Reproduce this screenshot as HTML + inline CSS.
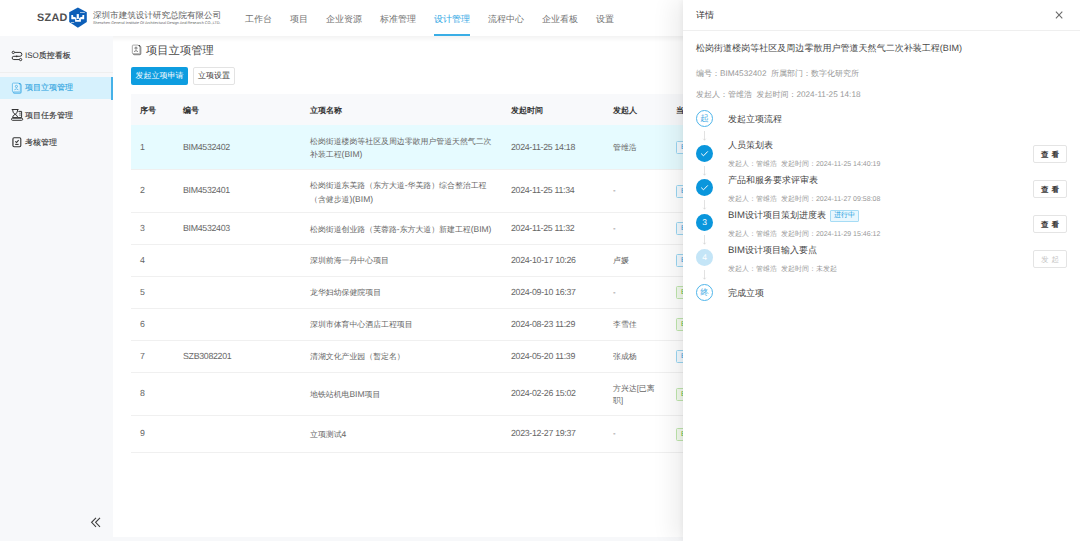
<!DOCTYPE html>
<html><head><meta charset="utf-8">
<style>
*{margin:0;padding:0;box-sizing:border-box}
html,body{text-rendering:geometricPrecision;width:1080px;height:541px;overflow:hidden;background:#f7f8fa;font-family:"Liberation Sans",sans-serif;color:#333}
.abs{position:absolute}
#hdr{position:absolute;left:0;top:0;width:1080px;height:36px;background:#fff}
#hdrsh{position:absolute;left:113px;top:36px;width:967px;height:6px;background:linear-gradient(#f3f3f3,#fff)}
.nav{position:absolute;top:12.6px;font-size:9px;line-height:12px;color:#737373;white-space:nowrap}
.nav.act{color:#2ea6e4}
#side{position:absolute;left:0;top:36px;width:113px;height:505px;background:#f7f8fa}
.si{position:absolute;left:0;width:113px;height:22px;font-size:8px;-webkit-text-stroke:0.12px;line-height:22px;color:#333;padding-left:25px;white-space:nowrap}
.si svg{position:absolute;left:11px;top:5px}
#main{position:absolute;left:113px;top:36px;width:967px;height:501px;background:#fff}
.btn{position:absolute;height:18px;font-size:8px;line-height:18px;text-align:center;border-radius:2px;white-space:nowrap}
.th{position:absolute;margin-top:1px;font-size:8px;font-weight:bold;color:#333;line-height:12px;white-space:nowrap}
.row{position:absolute;left:131px;width:560px;border-bottom:1px solid #f0f0f0}
.ln{font-size:8.2px}
.c{position:absolute;margin-top:0.8px;font-size:7.9px;line-height:12.6px;color:#666}
.num{font-size:8.8px;letter-spacing:-0.3px;margin-top:-0.4px}
#drw{position:absolute;left:683px;top:0;width:397px;height:541px;background:#fff;box-shadow:-10px 0 22px rgba(0,0,0,0.07),-2px 0 5px rgba(0,0,0,0.04)}
.circ{position:absolute;left:13px;width:17px;height:17px;border-radius:50%;text-align:center;font-size:8.5px;line-height:17px}
.stt{position:absolute;left:45px;font-size:9px;line-height:12px;color:#454545;white-space:nowrap}
.meta{position:absolute;margin-top:0.5px;left:45px;font-size:7px;line-height:9px;color:#999;white-space:nowrap}
.arr{position:absolute;left:21px;width:1px;background:#ccc}
.vbtn{position:absolute;left:350px;width:34px;height:18px;border:1px solid #e4e4e4;border-radius:2px;font-size:7.5px;font-weight:bold;line-height:18px;text-align:center;color:#3a3a3a;letter-spacing:3px;padding-left:3px}
</style></head><body>
<div id="hdr">
  <div class="abs" style="left:37px;top:11.5px;font-size:10.8px;line-height:13px;font-weight:bold;color:#505050;letter-spacing:0.3px">SZAD</div>
  <svg class="abs" style="left:66px;top:5px" width="26" height="26" viewBox="0 0 26 26"><polygon points="11.9,2.5 20.8,7.2 20.8,16.9 11.9,22.7 3.2,16.9 3.2,7.2" fill="#0d5fb8"/><g fill="#fff"><polygon points="5.3,9.9 7.1,9.9 7.1,11.8 9.6,12.3 9.6,14.3 5.3,14.3"/><path d="M9.1 12.8H10.4V15H13.1V12.8H14.9V16.8H9.1Z"/><rect x="10.7" y="9.1" width="2.2" height="4.8"/><polygon points="16.4,10.1 18.2,10.1 18.2,14.3 14.2,14.3 14.2,12.3 16.4,11.8"/><rect x="14" y="7.1" width="4.8" height="0.6"/><rect x="5" y="17.4" width="3.2" height="0.6"/></g></svg>
  <div class="abs" style="left:93px;top:9.5px;font-size:8.55px;line-height:11px;color:#606060;white-space:nowrap">深圳市建筑设计研究总院有限公司</div>
  <div class="abs" style="left:93px;top:21px;font-size:3.8px;line-height:4px;color:#666;white-space:nowrap">Shenzhen General Institute Of Architectural Design And Research CO.,LTD.</div>
  <div class="nav" style="left:245px">工作台</div>
  <div class="nav" style="left:290px">项目</div>
  <div class="nav" style="left:326px">企业资源</div>
  <div class="nav" style="left:380px">标准管理</div>
  <div class="nav act" style="left:434px">设计管理</div>
  <div class="abs" style="left:434px;top:33.7px;width:36px;height:2px;background:#3aaee6"></div>
  <div class="nav" style="left:488px">流程中心</div>
  <div class="nav" style="left:542px">企业看板</div>
  <div class="nav" style="left:596px">设置</div>
</div>
<div id="side">
  <div class="si" style="top:9px"><span style="-webkit-text-stroke:0">ISO</span>质控看板</div>
  <svg class="abs" style="z-index:2;left:8px;top:10px" width="20" height="20" viewBox="0 0 20 20"><g fill="none" stroke="#333" stroke-width="1"><path d="M6.5 6.4H11.9A1.95 1.95 0 0 1 11.9 10.3H5.8A1.62 1.62 0 0 0 5.8 13.55H11.4"/><circle cx="5.3" cy="6.4" r="1.15"/><circle cx="12.6" cy="13.55" r="1.15"/></g><circle cx="8.7" cy="10.3" r="0.9" fill="#333"/></svg>
  <svg class="abs" style="z-index:2;left:8px;top:42px" width="20" height="20" viewBox="0 0 20 20"><rect x="5.4" y="6.2" width="7.6" height="8.9" rx="1" fill="none" stroke="#5cb8ea" stroke-width="1.3"/><path d="M5.2 5.1H10.6L12.3 6.8V13.1Q12.3 13.9 11.5 13.9H5.2Q4.4 13.9 4.4 13.1V5.9Q4.4 5.1 5.2 5.1Z" fill="#e3f5fd" stroke="#6cc0ec" stroke-width="0.9"/><path d="M10.5 5.1L12.4 7V5.1Z" fill="#2a9fe0"/><circle cx="8.4" cy="8.4" r="1.1" fill="none" stroke="#55b5e9" stroke-width="0.9"/><path d="M6.4 11.8Q8.4 9.8 10.4 11.8" fill="none" stroke="#55b5e9" stroke-width="0.9"/></svg>
  <svg class="abs" style="z-index:2;left:8px;top:69px" width="20" height="20" viewBox="0 0 20 20"><g fill="none" stroke="#333" stroke-width="1"><path d="M3.7 4.5H10.5"/><path d="M4.6 4.5Q4.6 8.3 7.1 9.3Q4.6 10.4 4.6 12.6H9.7Q9.7 10.4 7.1 9.3Q9.7 8.3 9.7 4.5"/><path d="M10.4 6.4H13.6V12.6H9.9"/><path d="M11.2 8.2H12.8M11.2 10.1H12.8" stroke-width="0.8"/><rect x="3.5" y="13.2" width="11.2" height="2.1" rx="1"/></g></svg>
  <svg class="abs" style="z-index:2;left:8px;top:96px" width="20" height="20" viewBox="0 0 20 20"><g fill="none" stroke="#333" stroke-width="1.1"><rect x="4.9" y="5.7" width="7.9" height="9" rx="1.2"/><path d="M7.3 9.3L8.6 10.5L10.6 8.2"/><path d="M7.2 12.4H10.6"/></g><path d="M4.9 7V13.4" stroke="#777" stroke-width="0.8"/></svg>

  <div class="abs" style="left:0;top:35.5px;width:113px;height:1px;background:#efefef"></div>
  <div class="si" style="top:41px;background:#d6f1fd;color:#2aa3e0">项目立项管理</div>
  <div class="abs" style="left:111px;top:41px;width:2px;height:23px;background:#45b1e8"></div>
  <div class="si" style="top:69px">项目任务管理</div>
  <div class="si" style="top:96px">考核管理</div>
  <svg class="abs" style="left:89px;top:480px" width="13" height="13" viewBox="0 0 13 13"><path d="M7 1.8L2.6 6.3L7 10.8M11 1.8L6.6 6.3L11 10.8" fill="none" stroke="#3c3c3c" stroke-width="1.1"/></svg>
</div>
<div id="main"></div>
<div id="hdrsh"></div>
<div class="abs" style="left:146px;top:43.5px;font-size:11.3px;line-height:14px;color:#4a4a4a;white-space:nowrap">项目立项管理</div>
<svg class="abs" style="left:128px;top:42px" width="18" height="18" viewBox="0 0 18 18"><rect x="5.3" y="4.2" width="7.4" height="8.4" rx="1" fill="none" stroke="#8c8c8c" stroke-width="1.3"/><path d="M5.1 3.1H10.2L11.9 4.8V10.9Q11.9 11.7 11.1 11.7H5.1Q4.3 11.7 4.3 10.9V3.9Q4.3 3.1 5.1 3.1Z" fill="#fff" stroke="#a0a0a0" stroke-width="0.9"/><path d="M10.1 3.1L12 5V3.1Z" fill="#4a4a4a"/><circle cx="8" cy="6.1" r="1.05" fill="none" stroke="#6a6a6a" stroke-width="0.9"/><path d="M6.1 9.6Q8 7.6 9.9 9.6" fill="none" stroke="#6a6a6a" stroke-width="0.9"/></svg>
<div class="btn" style="left:131px;top:67.2px;width:57.2px;background:#0e9de0;color:#fff">发起立项申请</div>
<div class="btn" style="left:193px;top:67.2px;width:42px;border:1px solid #e3e3e3;color:#333;line-height:16px">立项设置</div>

<div class="abs" style="left:131px;top:94px;width:560px;height:32px;background:#f8f9fb;border-bottom:1px solid #ececec"></div>
<div class="th" style="left:140px;top:104px">序号</div>
<div class="th" style="left:183px;top:104px">编号</div>
<div class="th" style="left:310px;top:104px">立项名称</div>
<div class="th" style="left:511px;top:104px">发起时间</div>
<div class="th" style="left:613px;top:104px">发起人</div>
<div class="th" style="left:676px;top:104px">当前</div>

<div id="rows">
<div class="row" style="top:125px;height:45px;background:#e6fbff;"></div>
<div class="c num" style="left:140px;top:141.2px">1</div>
<div class="c num" style="left:183px;top:141.2px">BIM4532402</div>
<div class="c" style="left:310px;top:134.9px;white-space:nowrap">松岗街道楼岗等社区及周边零散用户管道天然气二次<br>补装工程<span style="font-size:8.5px">(BIM)</span></div>
<div class="c num" style="left:511px;top:141.2px;white-space:nowrap">2024-11-25 14:18</div>
<div class="c" style="left:613px;top:141.2px;white-space:nowrap">管维浩</div>
<div class="abs" style="left:676px;top:141.0px;width:16px;height:13px;border:1px solid #9ad6f2;background:#f2faff;border-radius:1.5px;font-size:7px;line-height:11px;color:#3a9be0;padding-left:4px">B</div>
<div class="row" style="top:169px;height:44px;"></div>
<div class="c num" style="left:140px;top:184.7px">2</div>
<div class="c num" style="left:183px;top:184.7px">BIM4532401</div>
<div class="c" style="left:310px;top:178.4px;white-space:nowrap">松岗街道东美路（东方大道<span style="font-size:8.5px">-</span>华美路）综合整治工程<br>（含健步道<span style="font-size:8.5px">)(BIM)</span></div>
<div class="c num" style="left:511px;top:184.7px;white-space:nowrap">2024-11-25 11:34</div>
<div class="c" style="left:613px;top:184.7px;white-space:nowrap">-</div>
<div class="abs" style="left:676px;top:184.5px;width:16px;height:13px;border:1px solid #9ad6f2;background:#f2faff;border-radius:1.5px;font-size:7px;line-height:11px;color:#3a9be0;padding-left:4px">B</div>
<div class="row" style="top:212px;height:33px;"></div>
<div class="c num" style="left:140px;top:222.2px">3</div>
<div class="c num" style="left:183px;top:222.2px">BIM4532403</div>
<div class="c" style="left:310px;top:222.2px;white-space:nowrap">松岗街道创业路（芙蓉路<span style="font-size:8.5px">-</span>东方大道）新建工程<span style="font-size:8.5px">(BIM)</span></div>
<div class="c num" style="left:511px;top:222.2px;white-space:nowrap">2024-11-25 11:32</div>
<div class="c" style="left:613px;top:222.2px;white-space:nowrap">-</div>
<div class="abs" style="left:676px;top:222.0px;width:16px;height:13px;border:1px solid #9ad6f2;background:#f2faff;border-radius:1.5px;font-size:7px;line-height:11px;color:#3a9be0;padding-left:4px">B</div>
<div class="row" style="top:244px;height:33px;"></div>
<div class="c num" style="left:140px;top:254.2px">4</div>
<div class="c" style="left:310px;top:254.2px;white-space:nowrap">深圳前海一丹中心项目</div>
<div class="c num" style="left:511px;top:254.2px;white-space:nowrap">2024-10-17 10:26</div>
<div class="c" style="left:613px;top:254.2px;white-space:nowrap">卢媛</div>
<div class="abs" style="left:676px;top:254.0px;width:16px;height:13px;border:1px solid #9ad6f2;background:#f2faff;border-radius:1.5px;font-size:7px;line-height:11px;color:#3a9be0;padding-left:4px">B</div>
<div class="row" style="top:276px;height:33px;"></div>
<div class="c num" style="left:140px;top:286.2px">5</div>
<div class="c" style="left:310px;top:286.2px;white-space:nowrap">龙华妇幼保健院项目</div>
<div class="c num" style="left:511px;top:286.2px;white-space:nowrap">2024-09-10 16:37</div>
<div class="c" style="left:613px;top:286.2px;white-space:nowrap">-</div>
<div class="abs" style="left:676px;top:286.0px;width:16px;height:13px;border:1px solid #bfe6ad;background:#f3faef;border-radius:1.5px;font-size:7px;line-height:11px;color:#67c23a;padding-left:4px">B</div>
<div class="row" style="top:308px;height:33px;"></div>
<div class="c num" style="left:140px;top:318.2px">6</div>
<div class="c" style="left:310px;top:318.2px;white-space:nowrap">深圳市体育中心酒店工程项目</div>
<div class="c num" style="left:511px;top:318.2px;white-space:nowrap">2024-08-23 11:29</div>
<div class="c" style="left:613px;top:318.2px;white-space:nowrap">李雪佳</div>
<div class="abs" style="left:676px;top:318.0px;width:16px;height:13px;border:1px solid #bfe6ad;background:#f3faef;border-radius:1.5px;font-size:7px;line-height:11px;color:#67c23a;padding-left:4px">B</div>
<div class="row" style="top:340px;height:33px;"></div>
<div class="c num" style="left:140px;top:350.2px">7</div>
<div class="c num" style="left:183px;top:350.2px">SZB3082201</div>
<div class="c" style="left:310px;top:350.2px;white-space:nowrap">清湖文化产业园（暂定名）</div>
<div class="c num" style="left:511px;top:350.2px;white-space:nowrap">2024-05-20 11:39</div>
<div class="c" style="left:613px;top:350.2px;white-space:nowrap">张成杨</div>
<div class="abs" style="left:676px;top:350.0px;width:16px;height:13px;border:1px solid #9ad6f2;background:#f2faff;border-radius:1.5px;font-size:7px;line-height:11px;color:#3a9be0;padding-left:4px">B</div>
<div class="row" style="top:372px;height:44px;"></div>
<div class="c num" style="left:140px;top:387.7px">8</div>
<div class="c" style="left:310px;top:387.7px;white-space:nowrap">地铁站机电<span style="font-size:8.5px">BIM</span>项目</div>
<div class="c num" style="left:511px;top:387.7px;white-space:nowrap">2024-02-26 15:02</div>
<div class="c" style="left:613px;top:381.4px;white-space:nowrap"><span style="display:block;line-height:11.8px;margin-top:0.6px">方兴达[已离<br>职]</span></div>
<div class="abs" style="left:676px;top:387.5px;width:16px;height:13px;border:1px solid #bfe6ad;background:#f3faef;border-radius:1.5px;font-size:7px;line-height:11px;color:#67c23a;padding-left:4px">B</div>
<div class="row" style="top:415px;height:38px;"></div>
<div class="c num" style="left:140px;top:427.7px">9</div>
<div class="c" style="left:310px;top:427.7px;white-space:nowrap">立项测试<span style="font-size:8.5px">4</span></div>
<div class="c num" style="left:511px;top:427.7px;white-space:nowrap">2023-12-27 19:37</div>
<div class="c" style="left:613px;top:427.7px;white-space:nowrap">-</div>
<div class="abs" style="left:676px;top:427.5px;width:16px;height:13px;border:1px solid #bfe6ad;background:#f3faef;border-radius:1.5px;font-size:7px;line-height:11px;color:#67c23a;padding-left:4px">B</div>
</div>

<div id="drw">
  <div class="abs" style="left:13px;top:9px;font-size:9px;line-height:12px;color:#333">详情</div>
  <svg class="abs" style="left:371.5px;top:11px" width="8" height="8" viewBox="0 0 8 8"><path d="M0.9 0.6L7.3 7.4M7.3 0.6L0.9 7.4" stroke="#6a6a6a" stroke-width="1.05"/></svg>
  <div class="abs" style="left:0;top:30px;width:397px;height:1px;background:#efefef"></div>
  <div class="abs" style="left:13px;top:41.5px;font-size:9.04px;line-height:12px;color:#484848;white-space:nowrap">松岗街道楼岗等社区及周边零散用户管道天然气二次补装工程(BIM)</div>
  <div class="abs" style="left:13px;top:69px;font-size:8px;line-height:10px;color:#999;white-space:nowrap">编号：<span class="ln">BIM4532402</span>&nbsp; 所属部门：数字化研究所</div>
  <div class="abs" style="left:13px;top:90px;font-size:8px;line-height:10px;color:#999;white-space:nowrap">发起人：管维浩&nbsp; 发起时间：<span class="ln">2024-11-25 14:18</span></div>

  <div class="circ" style="top:109.5px;border:1px solid #4fb5ea;color:#3aa9e4;line-height:15px">起</div>
  <div class="stt" style="top:112.5px">发起立项流程</div>

  <div class="circ" style="top:144.5px;background:#0a96dc"><svg width="17" height="17" viewBox="0 0 17 17" style="display:block"><path d="M5.2 8.6L7.5 10.8L11.8 6.4" fill="none" stroke="#fff" stroke-width="1"/></svg></div>
  <div class="stt" style="top:139.2px">人员策划表</div>
  <div class="meta" style="top:159.5px">发起人：管维浩&nbsp; 发起时间：2024-11-25 14:40:19</div>
  <div class="vbtn" style="top:145px">查看</div>

  <div class="circ" style="top:179.3px;background:#0a96dc"><svg width="17" height="17" viewBox="0 0 17 17" style="display:block"><path d="M5.2 8.6L7.5 10.8L11.8 6.4" fill="none" stroke="#fff" stroke-width="1"/></svg></div>
  <div class="stt" style="top:174.3px">产品和服务要求评审表</div>
  <div class="meta" style="top:194.6px">发起人：管维浩&nbsp; 发起时间：2024-11-27 09:58:08</div>
  <div class="vbtn" style="top:180px">查看</div>

  <div class="circ" style="top:213.9px;background:#0a96dc;color:#fff">3</div>
  <div class="stt" style="top:209.4px"><span style="font-size:9.5px">BIM</span>设计项目策划进度表</div>
  <div class="abs" style="left:147px;top:209.5px;width:29px;height:12px;border:1px solid #a6dcf5;background:#e8f7fe;color:#1f9fe0;font-size:7px;line-height:10px;text-align:center;border-radius:1px">进行中</div>
  <div class="meta" style="top:229.5px">发起人：管维浩&nbsp; 发起时间：2024-11-29 15:46:12</div>
  <div class="vbtn" style="top:215px">查看</div>

  <div class="circ" style="top:248.8px;background:#c4e5f7;color:#fff">4</div>
  <div class="stt" style="top:243.8px"><span style="font-size:9.5px">BIM</span>设计项目输入要点</div>
  <div class="meta" style="top:264.2px">发起人：管维浩&nbsp; 发起时间：未发起</div>
  <div class="vbtn" style="top:250px;color:#c4c4c4;font-weight:normal">发起</div>

  <div class="circ" style="top:284px;border:1px solid #4fb5ea;color:#3aa9e4;line-height:15px">终</div>
  <div class="stt" style="top:287px">完成立项</div>
  <svg class="abs" style="left:18px;top:130.6px" width="7" height="10" viewBox="0 0 7 10"><path d="M3.5 0V9.2M2.2 7.7L3.5 9.2L4.8 7.7" fill="none" stroke="#cfcfcf" stroke-width="0.6"/></svg>
  <svg class="abs" style="left:18px;top:165.6px" width="7" height="10" viewBox="0 0 7 10"><path d="M3.5 0V9.2M2.2 7.7L3.5 9.2L4.8 7.7" fill="none" stroke="#cfcfcf" stroke-width="0.6"/></svg>
  <svg class="abs" style="left:18px;top:200.4px" width="7" height="10" viewBox="0 0 7 10"><path d="M3.5 0V9.2M2.2 7.7L3.5 9.2L4.8 7.7" fill="none" stroke="#cfcfcf" stroke-width="0.6"/></svg>
  <svg class="abs" style="left:18px;top:235.1px" width="7" height="10" viewBox="0 0 7 10"><path d="M3.5 0V9.2M2.2 7.7L3.5 9.2L4.8 7.7" fill="none" stroke="#cfcfcf" stroke-width="0.6"/></svg>
  <svg class="abs" style="left:18px;top:269.9px" width="7" height="10" viewBox="0 0 7 10"><path d="M3.5 0V9.2M2.2 7.7L3.5 9.2L4.8 7.7" fill="none" stroke="#cfcfcf" stroke-width="0.6"/></svg>
</div>
</body></html>
